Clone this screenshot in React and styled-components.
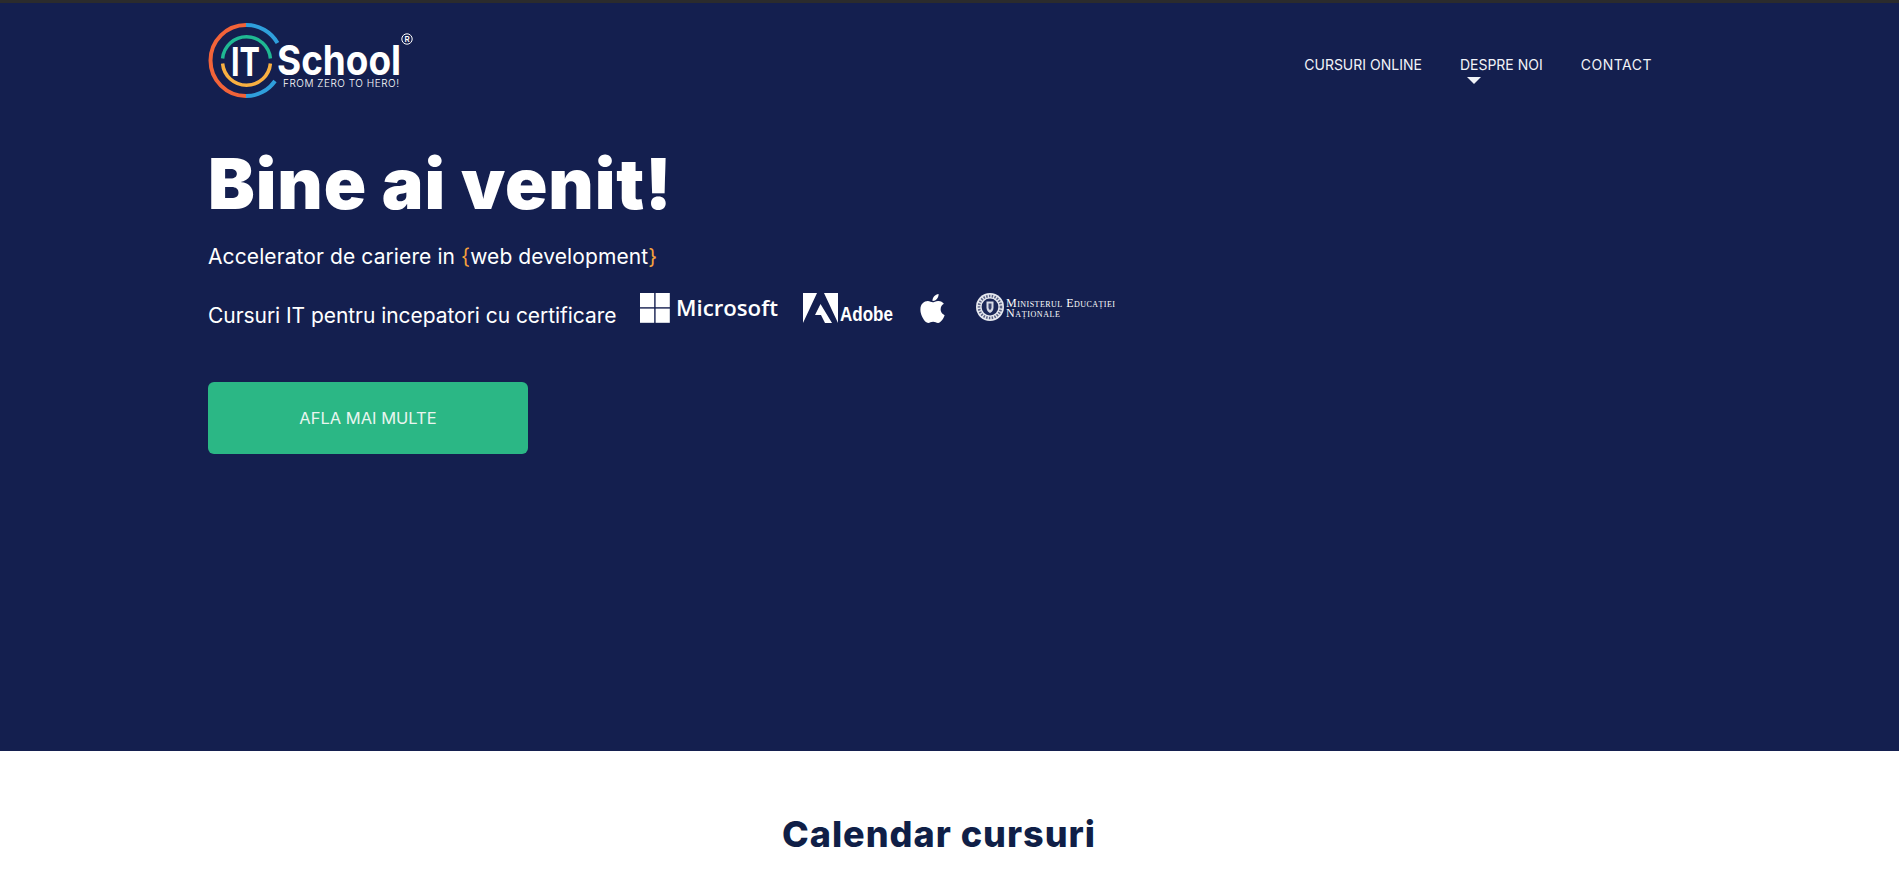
import React from 'react';
import styled, { createGlobalStyle } from 'styled-components';
import { FaApple } from 'react-icons/fa';

const GlobalStyle = createGlobalStyle`
  html, body {
    margin: 0;
    padding: 0;
    background: #fff;
    overflow: hidden;
  }
  body {
    font-family: Inter, "Noto Sans", "Liberation Sans", sans-serif;
  }
`;

const ItLogo = () => (
    <LogoSvg viewBox="208 22 210 80" role="img" aria-label="IT School">
        <g fill="none" strokeWidth="4">
            <path d="M246 25 A35.5 35.5 0 0 0 246 96" stroke="#f26339" />
            <path d="M246 25 A35.5 35.5 0 0 1 277.5 43" stroke="#2f9fdc" />
            <path d="M246 96 A35.5 35.5 0 0 0 275 81" stroke="#2f9fdc" />
        </g>
        <g fill="none" strokeWidth="3.5">
            <path d="M222.6 58.5 A24 24 0 0 1 270.4 58.5" stroke="#1fb893" />
            <path d="M222.6 63.5 A24 24 0 0 0 270.4 63.5" stroke="#f9b041" />
        </g>
        <g fill="#fff" fontFamily="Inter, sans-serif">
            <text x="231" y="76" fontSize="40" fontWeight="700" textLength="29" lengthAdjust="spacingAndGlyphs">IT</text>
            <text x="277" y="75" fontSize="41" fontWeight="700" textLength="124" lengthAdjust="spacingAndGlyphs">School</text>
            <text x="283" y="86.5" fontSize="10" fontWeight="300" textLength="116" lengthAdjust="spacing">FROM ZERO TO HERO!</text>
            <text x="407" y="42" fontSize="8" fontWeight="600" textAnchor="middle">R</text>
        </g>
        <circle cx="407" cy="39" r="5.2" fill="none" stroke="#fff" strokeWidth="1" />
    </LogoSvg>
);

const MicrosoftLogo = () => (
    <BrandSvg width="140" viewBox="0 0 140 32" role="img" aria-label="Microsoft">
        <g fill="#fff">
            <rect x="0" y="0" width="14.2" height="14.2" />
            <rect x="15.6" y="0" width="14.2" height="14.2" />
            <rect x="0" y="15.6" width="14.2" height="14.2" />
            <rect x="15.6" y="15.6" width="14.2" height="14.2" />
            <text x="36" y="23" fontSize="21" fontWeight="600" fontFamily="'Open Sans', sans-serif" textLength="102" lengthAdjust="spacingAndGlyphs">Microsoft</text>
        </g>
    </BrandSvg>
);

const AdobeLogo = () => (
    <BrandSvg width="92" viewBox="0 0 92 32" role="img" aria-label="Adobe">
        <g fill="#fff">
            <polygon points="0,0 14,0 0,30" />
            <polygon points="21,0 35,0 35,30" />
            <polygon points="17.5,11 29,30 22,30 18,22 12,22" />
            <text x="37" y="27.5" fontSize="20" fontWeight="700" fontFamily="'Liberation Sans', sans-serif" textLength="53" lengthAdjust="spacingAndGlyphs">Adobe</text>
        </g>
    </BrandSvg>
);

const MinistryLogo = () => (
    <BrandSvg width="142" viewBox="0 0 142 32" role="img" aria-label="Ministerul Educatiei Nationale">
        <circle cx="14" cy="14" r="14" fill="#e6e8ef" />
        <circle cx="14" cy="14" r="11" fill="none" stroke="#5a6285" strokeWidth="2.6" strokeDasharray="1.5 1.3" />
        <circle cx="14" cy="14" r="8.4" fill="#1b2757" />
        <path d="M10.5 8.5 H17.5 V14.5 Q17.5 18 14 20 Q10.5 18 10.5 14.5 Z" fill="#d7dae6" />
        <path d="M12.5 10.5 H15.5 V14.5 Q15.5 16 14 17 Q12.5 16 12.5 14.5 Z" fill="#39436e" />
        <g fill="#fff" fontFamily="'Liberation Serif', serif" fontSize="12" style={{ fontVariant: 'small-caps' }}>
            <text x="30" y="13.5" textLength="109" lengthAdjust="spacing">Ministerul Educației</text>
            <text x="30" y="24" textLength="54" lengthAdjust="spacing">Naționale</text>
        </g>
    </BrandSvg>
);

const App = () => {
    return (
        <>
            <GlobalStyle />
            <Page>
                <TopStrip />
                <Hero>
                    <Wrapper>
                        <Header>
                            <ItLogo />
                            <Nav>
                                <NavItem>CURSURI ONLINE</NavItem>
                                <NavItem $dropdown>DESPRE NOI</NavItem>
                                <NavItem $track="0.5px">CONTACT</NavItem>
                            </Nav>
                        </Header>
                        <Title>Bine ai venit!</Title>
                        <Tagline>
                            Accelerator de cariere in <Brace>{'{'}</Brace>web development<Brace>{'}'}</Brace>
                        </Tagline>
                        <CertRow>
                            <CertText>Cursuri IT pentru incepatori cu certificare</CertText>
                            <Brands>
                                <MicrosoftLogo />
                                <AdobeLogo />
                                <AppleMark />
                                <MinistryLogo />
                            </Brands>
                        </CertRow>
                        <CtaButton>AFLA MAI MULTE</CtaButton>
                    </Wrapper>
                </Hero>
                <Calendar>
                    <CalendarTitle>Calendar cursuri</CalendarTitle>
                </Calendar>
            </Page>
        </>
    );
};

const Page = styled.div`
  height: 881px;
  overflow: hidden;
  background: #fff;
`;

const TopStrip = styled.div`
  height: 3px;
  background: #2b2b2d;
`;

const Hero = styled.section`
  height: 748px;
  background: #141f4f;
  color: #fff;
`;

const Wrapper = styled.div`
  width: 1444px;
  margin-left: 208px;
`;

const Header = styled.header`
  display: flex;
  justify-content: space-between;
  align-items: center;
  padding-top: 19px;
`;

const LogoSvg = styled.svg`
  display: block;
  width: 210px;
  height: 80px;
`;

const Nav = styled.nav`
  display: flex;
  gap: 38px;
  margin-top: 5px;
`;

const NavItem = styled.a`
  position: relative;
  font-size: 14px;
  line-height: 22px;
  letter-spacing: ${(p) => p.$track || '0'};
  color: #f1f3f8;
  white-space: nowrap;

  ${(p) => p.$dropdown && `
    &::after {
      content: "";
      position: absolute;
      left: 7px;
      top: 23px;
      border-left: 7px solid transparent;
      border-right: 7px solid transparent;
      border-top: 7px solid #f1f3f8;
    }
  `}
`;

const Title = styled.h1`
  margin: 40px 0 0;
  font-size: 70px;
  line-height: 84px;
  font-weight: 900;
  letter-spacing: 0.9px;
  color: #fff;
`;

const Tagline = styled.p`
  margin: 16px 0 0;
  font-size: 21px;
  line-height: 30px;
  letter-spacing: 0.1px;
  color: #fff;
  white-space: nowrap;
`;

const Brace = styled.span`
  color: #f5a13b;
`;

const CertRow = styled.div`
  display: flex;
  align-items: flex-start;
  margin-top: 21px;
`;

const CertText = styled.span`
  margin-top: 8px;
  font-size: 21px;
  line-height: 30px;
  letter-spacing: -0.05px;
  color: #fff;
  white-space: nowrap;
`;

const Brands = styled.div`
  display: flex;
  align-items: flex-start;
  margin-left: 24px;
  gap: 23px;
`;

const BrandSvg = styled.svg`
  display: block;
  height: 32px;
`;

const AppleMark = styled(FaApple)`
  display: block;
  width: 33px;
  height: 33px;
  margin: -1.5px 4px 0 -2px;
  color: #fff;
`;

const CtaButton = styled.button`
  display: block;
  width: 320px;
  height: 72px;
  margin-top: 51px;
  border: 0;
  border-radius: 6px;
  background: #2bb785;
  color: #e8f5ef;
  font-family: inherit;
  font-size: 16.5px;
  cursor: pointer;
`;

const Calendar = styled.section`
  padding: 57px 21px 0 0;
  text-align: center;
`;

const CalendarTitle = styled.h2`
  margin: 0;
  font-size: 36px;
  line-height: 52px;
  font-weight: 800;
  letter-spacing: 1px;
  color: #101f47;
`;

export default App;
